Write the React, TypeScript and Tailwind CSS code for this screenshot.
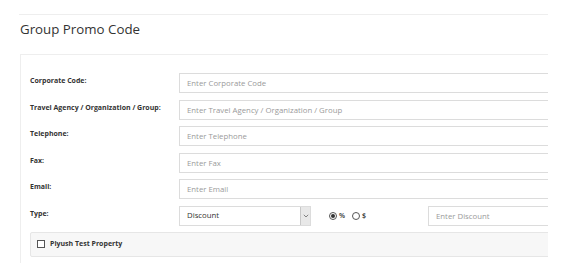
import React from "react";

const font = { fontFamily: '"Open Sans", "Noto Sans", sans-serif' };

interface FieldRowProps {
    label: string;
    placeholder: string;
}

function FieldRow({ label, placeholder }: FieldRowProps) {
    return (
        <div className="flex items-start h-[20px]">
            <label className="w-[149px] shrink-0 whitespace-nowrap pt-[2px] text-[7px] leading-[11px] font-bold text-[#333]">
                {label}
            </label>
            <input
                type="text"
                placeholder={placeholder}
                className="h-[20px] w-[400px] shrink-0 border border-[#dcdcdc] bg-white px-[7px] text-[7.8px] text-[#555] placeholder:text-[#9a9a9a] outline-none"
            />
        </div>
    );
}

export default function App() {
    return (
        <div className="min-h-[263px] bg-white" style={font}>
            <div className="ml-[19px] w-[529px] overflow-hidden pt-[14px]">
                {/* Page header */}
                <div className="border-t border-[#eeeeee] pl-[1px] pt-[4px]">
                    <h2 className="text-[13.3px] leading-[20px] text-[#333]">Group Promo Code</h2>
                </div>

                {/* Form card */}
                <div className="mt-[15px] ml-[1px] w-[560px] border-t border-l border-[#eeeeee] pl-[9px] pt-[18px] pb-[8px]">
                    <div className="flex flex-col gap-[6.6px]">
                        <FieldRow label="Corporate Code:" placeholder="Enter Corporate Code" />
                        <FieldRow label="Travel Agency / Organization / Group:" placeholder="Enter Travel Agency / Organization / Group" />
                        <FieldRow label="Telephone:" placeholder="Enter Telephone" />
                        <FieldRow label="Fax:" placeholder="Enter Fax" />
                        <FieldRow label="Email:" placeholder="Enter Email" />

                        {/* Type row */}
                        <div className="flex items-start h-[20px]">
                            <label className="w-[149px] shrink-0 pt-[2px] text-[7px] leading-[11px] font-bold text-[#333]">
                                Type:
                            </label>
                            <div className="flex h-[20px] w-[132px] shrink-0 items-center border border-[#dcdcdc] bg-white">
                                <span className="flex-1 pl-[7px] text-[7.8px] text-[#333]">Discount</span>
                                <span className="flex h-full w-[10px] items-center justify-center border-l border-[#c8c8c8] bg-[#e8e8e8]">
                                    <svg width="6" height="4" viewBox="0 0 6 4">
                                        <path d="M0.8 0.8 L3 3 L5.2 0.8" fill="none" stroke="#666" strokeWidth="0.8" />
                                    </svg>
                                </span>
                            </div>
                            <div className="ml-[18px] flex h-[20px] w-[99px] shrink-0 items-center gap-[2px] text-[7px] text-[#333]">
                                <span className="flex h-[8px] w-[8px] items-center justify-center rounded-full border border-[#555] bg-white">
                                    <span className="h-[4px] w-[4px] rounded-full bg-[#333]" />
                                </span>
                                <span className="font-semibold">%</span>
                                <span className="ml-[5px] h-[8px] w-[8px] rounded-full border border-[#555] bg-white" />
                                <span className="font-semibold">$</span>
                            </div>
                            <input
                                type="text"
                                placeholder="Enter Discount"
                                className="h-[20px] w-[150px] shrink-0 border border-[#dcdcdc] bg-white px-[7px] text-[7.8px] placeholder:text-[#9a9a9a] outline-none"
                            />
                        </div>
                    </div>

                    {/* Property list */}
                    <div className="mt-[6px] flex h-[25px] w-[540px] items-center gap-[5px] rounded-[2px] border border-[#e6e6e6] bg-[#f7f7f7] pl-[6px]">
                        <span className="h-[8px] w-[8px] border border-[#555] bg-white" />
                        <span className="text-[7px] font-bold text-[#333]">Piyush Test Property</span>
                    </div>
                </div>
            </div>
        </div>
    );
}
